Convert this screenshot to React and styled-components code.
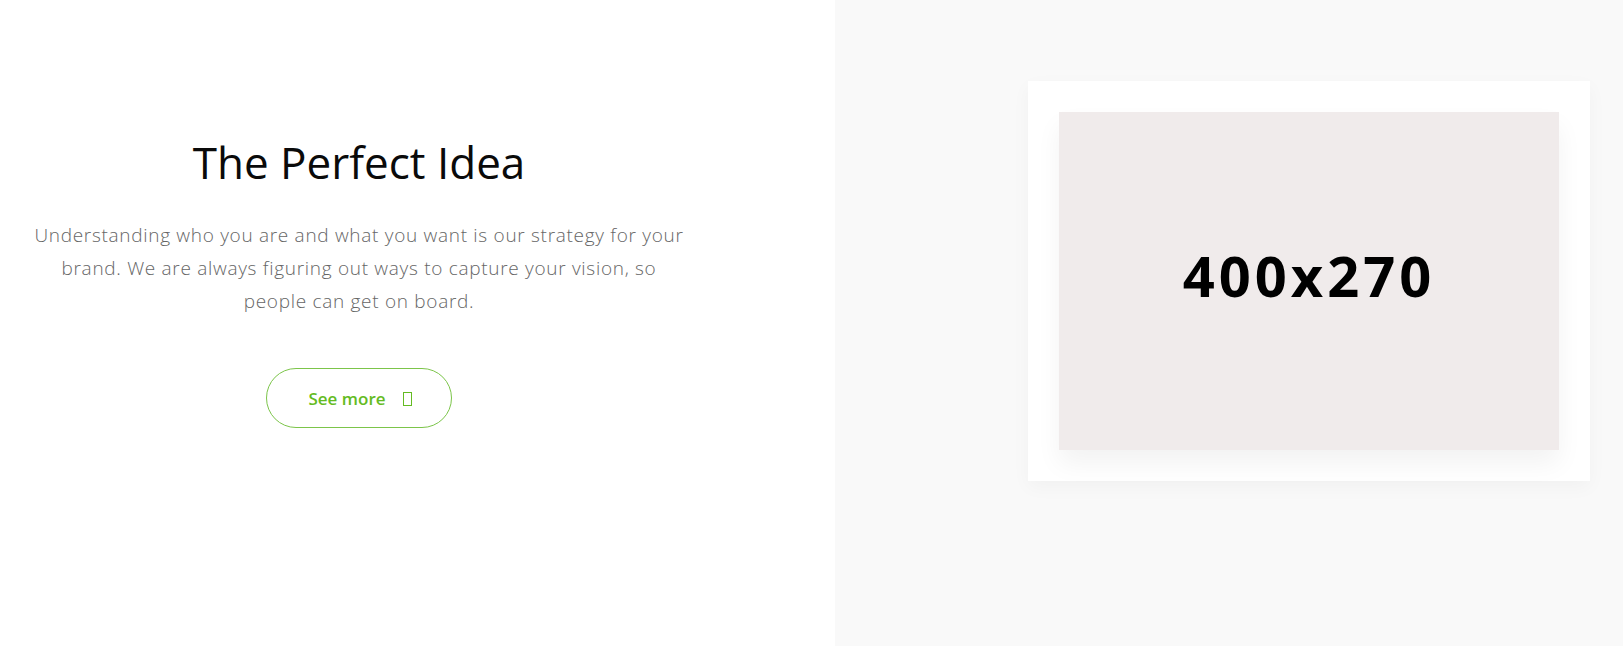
import React from "react";
import styled, { createGlobalStyle } from "styled-components";

const GlobalStyle = createGlobalStyle`
	body {
		margin: 0;
		font-family: "Open Sans", "Liberation Sans", sans-serif;
		background: #fff;
	}
`;

const Page = styled.div`
	display: flex;
	width: 1623px;
	height: 646px;
	overflow: hidden;
`;

const TextSide = styled.section`
	width: 835px;
	background: #fff;
	padding: 136px 0 0 31px;
	box-sizing: border-box;
`;

const TextBlock = styled.div`
	width: 656px;
	display: flex;
	flex-direction: column;
	align-items: center;
	text-align: center;
`;

const Title = styled.h2`
	margin: 0;
	font-size: 44px;
	font-weight: 400;
	line-height: 52px;
	color: #0a0a0a;
`;

const Lead = styled.p`
	margin: 31px 0 0;
	font-size: 19px;
	font-weight: 300;
	letter-spacing: 0.7px;
	line-height: 33px;
	color: #666;
`;

const MoreButton = styled.a`
	margin-top: 50px;
	width: 186px;
	height: 60px;
	box-sizing: border-box;
	border: 1px solid #7cc54a;
	border-radius: 30px;
	display: flex;
	align-items: center;
	justify-content: center;
	gap: 17px;
	color: #64bb22;
	font-size: 17px;
	font-weight: 600;
	text-decoration: none;
	padding-left: 2px;
`;

const MissingIcon = styled.span`
	width: 7px;
	height: 12px;
	border: 1px solid #64bb22;
	margin-top: 2px;
`;

const ImageSide = styled.section`
	flex: 1;
	background: #f9f9f9;
	padding: 81px 0 0 193px;
	box-sizing: border-box;
`;

const Card = styled.div`
	width: 562px;
	height: 400px;
	box-sizing: border-box;
	padding: 31px;
	background: #fff;
	box-shadow: 0 6px 18px rgba(0, 0, 0, 0.035);
`;

const Placeholder = styled.div`
	width: 500px;
	height: 338px;
	background: #f0ebeb;
	display: flex;
	align-items: center;
	justify-content: center;
	box-shadow: 0 14px 24px rgba(0, 0, 0, 0.05);
	font-size: 56px;
	font-weight: 700;
	letter-spacing: 4px;
	color: #000;
	padding-bottom: 12px;
	box-sizing: border-box;
`;

const App = () => {
	return (
		<>
			<GlobalStyle />
			<Page>
				<TextSide>
					<TextBlock>
						<Title>The Perfect Idea</Title>
						<Lead>
							Understanding who you are and what you want is our strategy for your
							brand. We are always figuring out ways to capture your vision, so
							people can get on board.
						</Lead>
						<MoreButton href="#">
							See more
							<MissingIcon />
						</MoreButton>
					</TextBlock>
				</TextSide>
				<ImageSide>
					<Card>
						<Placeholder>400x270</Placeholder>
					</Card>
				</ImageSide>
			</Page>
		</>
	);
};

export default App;
